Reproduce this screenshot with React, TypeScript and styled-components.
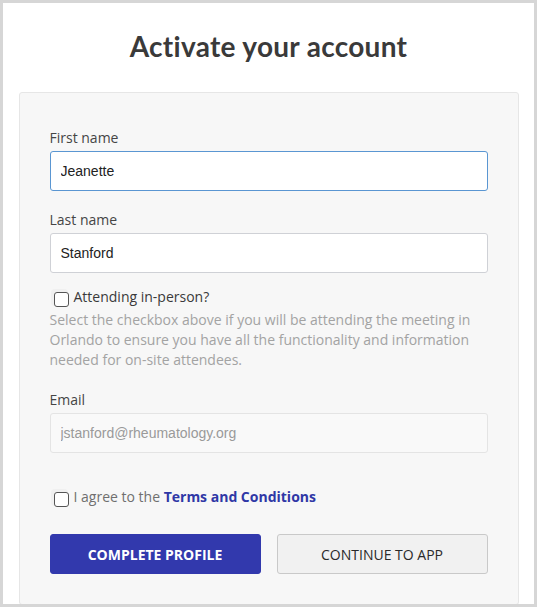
import React from "react";
import styled, { createGlobalStyle } from "styled-components";

const Global = createGlobalStyle`
  html, body { margin: 0; padding: 0; background: #fff; }
  * { box-sizing: border-box; }
`;

const Frame = styled.div`
  width: 537px;
  height: 607px;
  border: 3px solid #d6d6d6;
  background: #fff;
  overflow: hidden;
  display: flex;
  flex-direction: column;
  align-items: center;
`;

const Title = styled.h1`
  margin: 26px 0 0;
  height: 63px;
  flex: 0 0 auto;
  font-family: Lato, "Open Sans", sans-serif;
  font-weight: 700;
  font-size: 28px;
  line-height: 34px;
  color: #3a3a3a;
  letter-spacing: 0.3px;
  text-align: center;
`;

const Card = styled.div`
  width: 500px;
  flex: 0 0 auto;
  background: #f7f7f7;
  border: 1px solid #e6e6e6;
  border-radius: 3px;
  padding: 35px 30px 30px;
  display: flex;
  flex-direction: column;
  font-family: "Open Sans", sans-serif;
  font-size: 14px;
`;

const Field = styled.div<{ $gap?: number }>`
  display: flex;
  flex-direction: column;
  gap: 3px;
  margin-top: ${(p) => p.$gap ?? 0}px;
`;

const Label = styled.label`
  line-height: 20px;
  color: #454545;
`;

const Input = styled.input<{ $focused?: boolean }>`
  height: 40px;
  width: 100%;
  border: 1px solid ${(p) => (p.$focused ? "#5a96d2" : "#cfd1d6")};
  border-radius: 3px;
  background: #fff;
  padding: 0 10px;
  font-family: "Liberation Sans", Arial, sans-serif;
  font-size: 14px;
  color: #222;
  outline: none;
  &:disabled {
    background: #f9f9f9;
    border-color: #e4e4e4;
    color: #9a9a9a;
  }
`;

const CheckRow = styled.label<{ $gap: number }>`
  display: flex;
  align-items: flex-start;
  gap: 5px;
  margin-top: ${(p) => p.$gap}px;
  line-height: 20px;
  color: #3a3a3a;
`;

const Box = styled.input.attrs({ type: "checkbox" })`
  appearance: none;
  -webkit-appearance: none;
  margin: 5px 0 0 4px;
  width: 15px;
  height: 15px;
  flex: 0 0 auto;
  border: 1px solid #555;
  border-radius: 3px;
  background: #fff;
  box-shadow: -2px -2px 0 1px #f0f0f0;
`;

const RowText = styled.span<{ $muted?: boolean }>`
  color: ${(p) => (p.$muted ? "#6f6f6f" : "#3a3a3a")};
`;

const Link = styled.a`
  color: #2f37a6;
  font-weight: 700;
  text-decoration: none;
`;

const Help = styled.p`
  margin: 3px 0 0;
  line-height: 20px;
  color: #a3a3a3;
`;

const Buttons = styled.div`
  display: grid;
  grid-template-columns: 1fr 1fr;
  gap: 16px;
  margin-top: 27px;
`;

const Button = styled.button<{ $primary?: boolean }>`
  height: 40px;
  border-radius: 3px;
  font-family: "Open Sans", sans-serif;
  font-size: 14px;
  text-transform: uppercase;
  cursor: pointer;
  border: 1px solid ${(p) => (p.$primary ? "#3239ad" : "#c9c9c9")};
  background: ${(p) => (p.$primary ? "#3239ad" : "#f1f1f1")};
  color: ${(p) => (p.$primary ? "#fff" : "#2a2a2a")};
  font-weight: ${(p) => (p.$primary ? 700 : 500)};
`;

export default function App() {
  return (
    <>
      <Global />
      <Frame>
        <Title>Activate your account</Title>
        <Card>
          <Field>
            <Label>First name</Label>
            <Input $focused defaultValue="Jeanette" />
          </Field>
          <Field $gap={19}>
            <Label>Last name</Label>
            <Input defaultValue="Stanford" />
          </Field>
          <CheckRow $gap={14}>
            <Box />
            <RowText>Attending in-person?</RowText>
          </CheckRow>
          <Help>
            Select the checkbox above if you will be attending the meeting in
            Orlando to ensure you have all the functionality and information
            needed for on-site attendees.
          </Help>
          <Field $gap={20}>
            <Label>Email</Label>
            <Input disabled defaultValue="jstanford@rheumatology.org" />
          </Field>
          <CheckRow $gap={34}>
            <Box />
            <RowText $muted>
              I agree to the <Link href="#">Terms and Conditions</Link>
            </RowText>
          </CheckRow>
          <Buttons>
            <Button $primary>Complete Profile</Button>
            <Button>Continue to App</Button>
          </Buttons>
        </Card>
      </Frame>
    </>
  );
}
